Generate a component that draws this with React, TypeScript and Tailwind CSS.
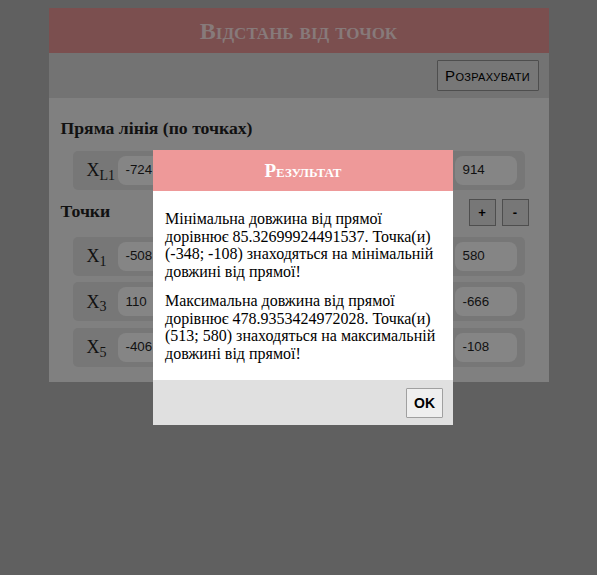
import React from "react";

const serif = { fontFamily: '"Liberation Serif", "Times New Roman", serif' };
const sans = { fontFamily: '"Liberation Sans", Arial, sans-serif' };

type Pair = { l: string; sub: string; v: string };

function Row({ left, right }: { left: Pair; right: string }) {
  return (
    <div className="h-[39px] rounded-[5px] bg-[#777777] flex items-center justify-between pl-[14px] pr-[8px] mx-[12px]">
      <div className="flex items-center">
        <div className="w-[31px] text-[18px] leading-none text-[#111] whitespace-nowrap" style={serif}>
          {left.l}
          <sub className="text-[14px] leading-none">{left.sub}</sub>
        </div>
        <div
          className="w-[62px] h-[29px] rounded-[8px] bg-[#858585] px-[8px] flex items-center text-[13.33px] leading-none text-[#111]"
          style={sans}
        >
          {left.v}
        </div>
      </div>
      <div
        className="w-[62px] h-[29px] rounded-[8px] bg-[#858585] px-[8px] flex items-center text-[13.33px] leading-none text-[#111]"
        style={sans}
      >
        {right}
      </div>
    </div>
  );
}

export default function App() {
  return (
    <div className="relative min-h-[575px] bg-[#606060]">
      <div className="w-[500px] mx-auto pt-[8px]">
        <div className="h-[45px] bg-[#7b4f4f] flex items-center justify-center">
          <div
            className="text-[24px] leading-none font-bold text-[#877a7a] [font-variant:small-caps]"
            style={serif}
          >
            Відстань від точок
          </div>
        </div>
        <div className="h-[45px] bg-[#737373] flex items-center justify-end pr-[10px]">
          <div
            className="w-[102px] h-[31px] border border-[#4e4e4e] bg-[#777777] flex items-center justify-center text-[15px] leading-none tracking-[0.3px] text-black [font-variant:small-caps] rounded-[1px]"
            style={sans}
          >
            Розрахувати
          </div>
        </div>
        <div className="bg-[#808080] pt-[20px] pb-[15px] px-[12px]">
          <div className="text-[17.7px] font-bold text-[#111] leading-[21.5px] mb-[11px]" style={serif}>
            Пряма лінія (по точках)
          </div>
          <Row left={{ l: "X", sub: "L1", v: "-724" }} right="914" />
          <div className="mt-[9px] h-[27px] flex items-center justify-between">
            <div className="text-[17.7px] leading-none font-bold text-[#111]" style={serif}>
              Точки
            </div>
            <div className="flex gap-[6px] pr-[8px]">
              <div
                className="w-[27px] h-[27px] border border-[#4e4e4e] bg-[#777777] flex items-center justify-center text-[13px] leading-none font-bold text-black"
                style={sans}
              >
                +
              </div>
              <div
                className="w-[27px] h-[27px] border border-[#4e4e4e] bg-[#777777] flex items-center justify-center text-[13px] leading-none font-bold text-black"
                style={sans}
              >
                -
              </div>
            </div>
          </div>
          <div className="mt-[11px] flex flex-col gap-[6.5px]">
            <Row left={{ l: "X", sub: "1", v: "-508" }} right="580" />
            <Row left={{ l: "X", sub: "3", v: "110" }} right="-666" />
            <Row left={{ l: "X", sub: "5", v: "-406" }} right="-108" />
          </div>
        </div>
      </div>

      <div className="absolute left-[153px] top-[150px] w-[300px]">
        <div className="h-[41px] bg-[#ee9999] flex items-center justify-center">
          <div className="text-[19px] leading-none font-bold text-white [font-variant:small-caps]" style={serif}>
            Результат
          </div>
        </div>
        <div
          className="bg-white px-[12px] pt-[19px] pb-[17px] text-[16px] leading-[17.7px] text-black flex flex-col gap-[11px]"
          style={serif}
        >
          <p>
            Мінімальна довжина від прямої дорівнює 85.32699924491537. Точка(и) (-348; -108) знаходяться на мінімальній
            довжині від прямої!
          </p>
          <p>
            Максимальна довжина від прямої дорівнює 478.9353424972028. Точка(и) (513; 580) знаходяться на максимальній
            довжині від прямої!
          </p>
        </div>
        <div className="h-[45px] bg-[#e0e0e0] flex items-start justify-end pt-[8px] pr-[10px]">
          <div
            className="w-[37px] h-[30px] border border-[#a0a0a0] bg-[#efefef] flex items-center justify-center text-[14px] leading-none font-bold text-black rounded-[1px]"
            style={sans}
          >
            OK
          </div>
        </div>
      </div>
    </div>
  );
}
